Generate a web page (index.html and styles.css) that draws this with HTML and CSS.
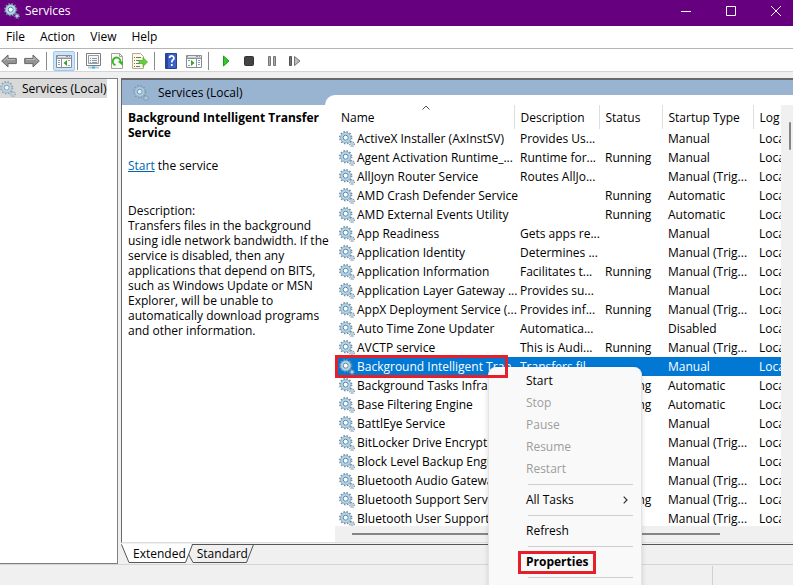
FILE: index.html
```html
<!DOCTYPE html>
<html lang="en">
<head>
<meta charset="utf-8">
<title>Services</title>
<link rel="stylesheet" href="styles.css">
</head>
<body>
<svg class="defs" aria-hidden="true">
  <symbol id="gear" viewBox="0 0 16 16">
    <circle cx="6.700" cy="6.700" r="5.800" fill="none" stroke="#748c9e" stroke-width="1.800" stroke-dasharray="1.500 1.540"/>
    <circle cx="6.700" cy="6.700" r="4" fill="#fff" stroke="#b4d6ea" stroke-width="2.600"/>
    <circle cx="6.700" cy="6.700" r="5.100" fill="none" stroke="#7a9fb7" stroke-width=".7"/>
    <circle cx="6.700" cy="6.700" r="2.500" fill="#fff" stroke="#5483a4" stroke-width="1"/>
    <circle cx="13" cy="13" r="2.300" fill="none" stroke="#7690a4" stroke-width="1.300" stroke-dasharray="1 .8"/>
    <circle cx="13" cy="13" r="1.300" fill="#f0f7fb" stroke="#97b8cc"/>
  </symbol>
</svg>
<div class="window">
  <header class="titlebar">
    <svg class="app-icon"><use href="#gear"/></svg>
    <h1>Services</h1>
    <button class="caption" aria-label="Minimize"><svg viewBox="0 0 10 10"><path d="M0 5.500h10"/></svg></button>
    <button class="caption" aria-label="Maximize"><svg viewBox="0 0 10 10"><path d="M.5.5h9v9h-9z"/></svg></button>
    <button class="caption" aria-label="Close"><svg viewBox="0 0 10 10"><path d="M0 0l10 10M10 0L0 10"/></svg></button>
  </header>
  <nav class="menubar">
    <button>File</button><button>Action</button><button>View</button><button>Help</button>
  </nav>
  <div class="toolbar">
    <div class="group">
      <button aria-label="Back"><svg viewBox="0 0 16 16"><path d="M.7 8L7 2v3.400h8.300v5.200H7V14z" fill="#949494" stroke="#666"/><path d="M3 7.600L6.300 4.500v2h7.700" fill="none" stroke="#bbb"/></svg></button>
      <button aria-label="Forward"><svg viewBox="0 0 16 16"><path d="M15.300 8L9 2v3.400H.7v5.200H9V14z" fill="#949494" stroke="#666"/><path d="M2 6.500h8v-2L13 7.600" fill="none" stroke="#bbb"/></svg></button>
    </div>
    <div class="group single">
      <button class="pressed" aria-label="Show/Hide Console Tree"><svg viewBox="0 0 16 16"><path d="M.5 2.500h15v12H.5z" fill="#fff" stroke="#858b90"/><path d="M1 2.500h14v2H1z" fill="#8b9299"/><path d="M2 3.500h8M12 3.500h1M14 3.500h1" stroke="#e5eaee"/><path d="M.5 5.500h15M5.500 6v8.500" stroke="#8b9299"/><path d="M2 7.500h2M2 9.500h2M2 11.500h2M12 7.500h2M12 12.500h2" stroke="#7e9fc4"/><path d="M11 7v6L7.500 10z" fill="#37a32c"/></svg></button>
    </div>
    <div class="group">
      <button aria-label="Properties"><svg viewBox="0 0 16 16"><path d="M.5.500h14v12H.5z" fill="#fff" stroke="#7d7d7d"/><path d="M2.500 2.500h10v8h-10z" fill="#f4f6f8" stroke="#9a9a9a"/><path d="M4 5.500h1M6 5.500h5M4 7.500h1M6 7.500h5M4 9.500h1M6 9.500h5" stroke="#8797a6"/><path d="M2 14.500h11" stroke="#a9cfe4" stroke-width="2"/><path d="M6 14.500h3" stroke="#45b1e8" stroke-width="2"/></svg></button>
      <button aria-label="Refresh"><svg viewBox="0 0 16 16"><path d="M2.500.5h8l3 3v12h-11z" fill="#fcfcf5" stroke="#a2a29b"/><path d="M10.500.5v3h3" fill="none" stroke="#a2a29b"/><path d="M6.500 12A3.800 3.800 0 1 1 11.300 9" fill="none" stroke="#38b52c" stroke-width="2"/><path d="M8.500 8.500H14v4.500z" fill="#38b52c"/></svg></button>
      <button aria-label="Export List"><svg viewBox="0 0 16 16"><path d="M.5.5h8l3 3v12H.5z" fill="#fffbe3" stroke="#b4aa91"/><path d="M2 4.500h1M4 4.500h5M2 7.500h1M4 7.500h4M2 10.500h1M4 10.500h4M2 13.500h1M4 13.500h4" stroke="#6b7880"/><path d="M7 7.500h4V4.500L15.500 9 11 13.500v-3H7z" fill="#65d13b" stroke="#49a92c" stroke-width=".7"/></svg></button>
    </div>
    <div class="group">
      <button aria-label="Help"><svg viewBox="0 0 16 16"><path d="M2.500.5h11v15h-11z" fill="#3b5fcb" stroke="#29438f"/><path d="M3 1h2v14H3z" fill="#27479f"/><path d="M6.500 5a2.200 2.200 0 1 1 3.300 2c-1 .6-1 1-1 2.500M8.800 11v2" fill="none" stroke="#fff" stroke-width="1.800"/></svg></button>
      <button aria-label="Show/Hide Action Pane"><svg viewBox="0 0 16 16"><path d="M.5 2.500h15v12H.5z" fill="#fff" stroke="#858b90"/><path d="M1 2.500h14v2H1z" fill="#8b9299"/><path d="M2 3.500h8M12 3.500h1M14 3.500h1" stroke="#e5eaee"/><path d="M.5 5.500h15M10.500 6v8.500" stroke="#8b9299"/><path d="M12 7.500h2M12 9.500h2M12 11.500h2M2 7.500h2M2 12.500h2" stroke="#7e9fc4"/><path d="M5 7v6l3.500-3z" fill="#37a32c"/></svg></button>
    </div>
    <div class="group wide">
      <button aria-label="Start Service"><svg viewBox="0 0 16 16"><path d="M5.500 3v10l5.500-5z" fill="#35c62c" stroke="#1e9b1a"/></svg></button>
      <button aria-label="Stop Service"><svg viewBox="0 0 16 16"><rect x="3.500" y="3.500" width="9" height="9" rx="1" fill="#444" stroke="#333"/></svg></button>
      <button aria-label="Pause Service"><svg viewBox="0 0 16 16"><path d="M4.500 3.500h2v9h-2zM9.500 3.500h2v9h-2z" fill="#aaa" stroke="#777"/></svg></button>
      <button aria-label="Restart Service"><svg viewBox="0 0 16 16"><path d="M2.500 3.500h2v9h-2z" fill="#777" stroke="#555"/><path d="M7.500 3.500v9l5.500-4.500z" fill="#bbb" stroke="#777"/></svg></button>
    </div>
  </div>
  <main class="body">
    <aside class="tree"><a href="#"><svg><use href="#gear"/></svg><span>Services (Local)</span></a></aside>
    <section class="content">
      <div class="view">
        <h2 class="view-title"><svg><use href="#gear"/></svg>Services (Local)</h2>
        <div class="details">
          <h3>Background Intelligent Transfer Service</h3>
          <p><a href="#">Start</a> the service</p>
          <p class="description">Description:<br>Transfers files in the background using idle network bandwidth. If the service is disabled, then any applications that depend on BITS, such as Windows Update or MSN Explorer, will be unable to automatically download programs and other information.</p>
        </div>
        <div class="list">
          <div class="rows">
          <table>
            <colgroup><col class="c-name"><col class="c-desc"><col class="c-status"><col class="c-type"><col></colgroup>
            <thead><tr><th>Name<svg class="sort" viewBox="0 0 8 5"><path d="M.5 4.500L4 1l3.500 3.500"/></svg></th><th>Description</th><th>Status</th><th>Startup Type</th><th>Log</th></tr></thead>
            <tbody>
            <tr><td><svg><use href="#gear"/></svg>ActiveX Installer (AxInstSV)</td><td>Provides Us...</td><td></td><td>Manual</td><td>Local</td></tr>
            <tr><td><svg><use href="#gear"/></svg>Agent Activation Runtime_...</td><td>Runtime for...</td><td>Running</td><td>Manual</td><td>Local</td></tr>
            <tr><td><svg><use href="#gear"/></svg>AllJoyn Router Service</td><td>Routes AllJo...</td><td></td><td>Manual (Trig...</td><td>Local</td></tr>
            <tr><td><svg><use href="#gear"/></svg>AMD Crash Defender Service</td><td></td><td>Running</td><td>Automatic</td><td>Local</td></tr>
            <tr><td><svg><use href="#gear"/></svg>AMD External Events Utility</td><td></td><td>Running</td><td>Automatic</td><td>Local</td></tr>
            <tr><td><svg><use href="#gear"/></svg>App Readiness</td><td>Gets apps re...</td><td></td><td>Manual</td><td>Local</td></tr>
            <tr><td><svg><use href="#gear"/></svg>Application Identity</td><td>Determines ...</td><td></td><td>Manual (Trig...</td><td>Local</td></tr>
            <tr><td><svg><use href="#gear"/></svg>Application Information</td><td>Facilitates t...</td><td>Running</td><td>Manual (Trig...</td><td>Local</td></tr>
            <tr><td><svg><use href="#gear"/></svg>Application Layer Gateway ...</td><td>Provides su...</td><td></td><td>Manual</td><td>Local</td></tr>
            <tr><td><svg><use href="#gear"/></svg>AppX Deployment Service (...</td><td>Provides inf...</td><td>Running</td><td>Manual (Trig...</td><td>Local</td></tr>
            <tr><td><svg><use href="#gear"/></svg>Auto Time Zone Updater</td><td>Automatica...</td><td></td><td>Disabled</td><td>Local</td></tr>
            <tr><td><svg><use href="#gear"/></svg>AVCTP service</td><td>This is Audi...</td><td>Running</td><td>Manual (Trig...</td><td>Local</td></tr>
            <tr class="selected"><td><svg><use href="#gear"/></svg>Background Intelligent Tran<span class="marker"></span></td><td>Transfers fil...</td><td></td><td>Manual</td><td>Local</td></tr>
            <tr><td><svg><use href="#gear"/></svg>Background Tasks Infrast</td><td></td><td>Running</td><td>Automatic</td><td>Local</td></tr>
            <tr><td><svg><use href="#gear"/></svg>Base Filtering Engine</td><td></td><td>Running</td><td>Automatic</td><td>Local</td></tr>
            <tr><td><svg><use href="#gear"/></svg>BattlEye Service</td><td></td><td></td><td>Manual</td><td>Local</td></tr>
            <tr><td><svg><use href="#gear"/></svg>BitLocker Drive Encryptio</td><td></td><td></td><td>Manual (Trig...</td><td>Local</td></tr>
            <tr><td><svg><use href="#gear"/></svg>Block Level Backup Engin</td><td></td><td></td><td>Manual</td><td>Local</td></tr>
            <tr><td><svg><use href="#gear"/></svg>Bluetooth Audio Gateway</td><td></td><td></td><td>Manual (Trig...</td><td>Local</td></tr>
            <tr><td><svg><use href="#gear"/></svg>Bluetooth Support Servic</td><td></td><td>Running</td><td>Manual (Trig...</td><td>Local</td></tr>
            <tr><td><svg><use href="#gear"/></svg>Bluetooth User Support S</td><td></td><td></td><td>Manual (Trig...</td><td>Local</td></tr>
            </tbody>
          </table>
          </div>
          <div class="vscroll"><span></span></div>
          <div class="hscroll"><span></span></div>
        </div>
      </div>
      <div class="tabs">
        <svg class="tab-lines" viewBox="0 0 135 20"><path d="M0 0h71L64 18.500H8z" fill="#fff"/><path d="M.5.5L8 18.500h56.500L71.500.5H135" fill="none" stroke="#555"/><path d="M67.500 10L72 18.500h53.500L132.500.5" fill="none" stroke="#555"/></svg>
        <button>Extended</button><button>Standard</button>
      </div>
    </section>
  </main>
  <footer class="statusbar"><span></span><span></span></footer>
</div>
<div class="context" role="menu">
  <button role="menuitem">Start</button>
  <button role="menuitem" disabled>Stop</button>
  <button role="menuitem" disabled>Pause</button>
  <button role="menuitem" disabled>Resume</button>
  <button role="menuitem" disabled>Restart</button>
  <hr>
  <button role="menuitem">All Tasks<svg viewBox="0 0 5 8"><path d="M.7.7L4 4 .7 7.300"/></svg></button>
  <hr>
  <button role="menuitem">Refresh</button>
  <hr>
  <button role="menuitem" class="default">Properties<span class="marker"></span></button>
  <hr>
</div>
</body>
</html>
```
FILE: styles.css
```css
* { box-sizing: border-box; }
html, body { height: 100%; }
body {
  margin: 0;
  overflow: hidden;
  color: #000;
  background: #f0f0f0;
  font: 12px/15px "Open Sans", "Noto Sans", sans-serif;
}
button {
  margin: 0;
  padding: 0;
  border: 0;
  background: none;
  color: inherit;
  font: inherit;
}
h1, h2, h3, p { margin: 0; font-size: 12px; font-weight: 400; }
svg { display: block; width: 16px; height: 16px; flex: none; }
.defs { position: absolute; width: 0; height: 0; }
.window { display: flex; flex-direction: column; height: 100%; }

.titlebar {
  display: flex;
  align-items: center;
  height: 26px;
  padding: 0 1px 5px 4px;
  background: #66007f;
  color: #fff;
}
.titlebar h1 { flex: 1; padding-left: 5px; }
.caption { width: 45px; height: 20px; display: grid; place-items: center; }
.caption:last-child { margin-right: -6px; }
.caption svg { width: 10px; height: 10px; fill: none; stroke: #fff; }

.menubar {
  display: flex;
  gap: 15px;
  height: 23px;
  padding: 0 0 1px 6px;
  background: #fff;
  border-bottom: 1px solid #b5b5b5;
}

.toolbar {
  display: flex;
  align-items: center;
  height: 23px;
  padding-top: 2px;
  background: #fff;
  border-bottom: 1px solid #d5d5d5;
}
.group { display: flex; align-items: center; gap: 7px; padding: 0 6px; height: 18px; border-left: 1px solid #8a8a8a; }
.group:first-child { padding-left: 1px; border-left: 0; }
.group + .group { padding-left: 8px; }
.group + .single { padding: 0 2px 0 6px; }
.group + .wide { padding-left: 9px; }
.toolbar .pressed {
  display: grid;
  place-items: center;
  width: 22px;
  height: 20px;
  border: 1px solid #99c9ef;
  border-radius: 2px;
  background: #cce5fa;
}

.body { flex: 1; display: flex; gap: 3px; min-height: 0; padding-top: 6px; }
.tree {
  width: 118px;
  background: #fff;
  border: 1px solid #7b7f86;
  border-left: 0;
}
.tree a {
  display: flex;
  align-items: center;
  gap: 6px;
  width: 107px;
  height: 19px;
  background: #d9d9d9;
  color: inherit;
  text-decoration: none;
  white-space: nowrap;
}
.tree svg, .view-title svg { opacity: .7; }
.content { flex: 1; display: flex; flex-direction: column; min-width: 0; }
.view {
  flex: 1;
  display: grid;
  grid-template: 15px 10px 1fr / 203px 1fr;
  min-height: 0;
  background: #fff;
  border: solid #696969;
  border-width: 2px 0 0 1px;
  border-bottom: 1px solid #dedede;
}
.view-title {
  grid-area: 1 / 1 / 3 / 3;
  display: flex;
  align-items: center;
  gap: 9px;
  padding-left: 11px;
  background: #99b4d1;
}
.details { grid-area: 3 / 1; z-index: 1; margin-right: -12px; padding: 5px 0 0 6px; }
.details h3 { font-weight: 700; margin-bottom: 18px; }
.details .description { margin-top: 30px; }
.details a { color: #0066b4; }

.list {
  grid-area: 2 / 2 / 4 / 3;
  display: grid;
  grid-template: 10px 1fr 16px / 1fr 12px;
  padding-left: 10px;
  min-height: 0;
  background: #fff;
  border-top-left-radius: 10px;
}
.rows { grid-area: 1 / 1 / 3 / 2; overflow: hidden; padding-top: 10px; }
table { width: 100%; border-collapse: collapse; table-layout: fixed; }
.c-name { width: 179px; }
.c-desc { width: 85px; }
.c-status { width: 63px; }
.c-type { width: 91px; }
th, td { padding: 0 0 0 6px; height: 19px; white-space: nowrap; text-align: left; font-weight: 400; }
th { height: 24px; border-right: 1px solid #dedede; position: relative; }
th:last-child { border-right: 0; }
.sort { position: absolute; left: 87px; top: 0; width: 8px; height: 5px; fill: none; stroke: #555; }
td:first-child { padding-left: 4px; position: relative; line-height: 19px; }
td svg { display: inline-block; vertical-align: -4px; margin-right: 2px; }
.selected { background: #0078d4; color: #fff; }
.vscroll { grid-area: 2 / 2 / 3 / 3; background: #f0f0f0; padding: 17px 2px 0 8px; }
.vscroll span { display: block; height: 28px; background: #858585; border-radius: 1px; }
.hscroll { grid-area: 3 / 1 / 4 / 3; background: #f0f0f0; padding: 7px 73px 0 17px; }
.hscroll span { display: block; height: 2px; background: #858585; }

.marker { position: absolute; border: 3px solid #e5202b; z-index: 1; }
.selected .marker { inset: -2px 6px -2px 0; }

.tabs { position: relative; display: flex; gap: 11px; height: 20px; margin-top: 1px; padding-left: 12px; border-top: 1px solid #555; }
.tab-lines { position: absolute; left: 0; top: -1px; width: 135px; height: 20px; }
.tabs button { position: relative; height: 17px; }

.statusbar { display: flex; height: 21px; border-top: 1px solid #d5d5d5; }
.statusbar span { width: 81px; margin-top: 1px; border-left: 1px solid #d0d0d0; }
.statusbar span:first-child { flex: 1; border: 0; }

.context {
  position: absolute;
  left: 488px;
  top: 367px;
  width: 154px;
  padding: 3px 0 20px;
  background: #f9f9f9;
  border: 1px solid #e3e3e3;
  border-top: 0;
  border-radius: 8px;
  box-shadow: 0 2px 5px rgba(0, 0, 0, .15);
}
.context button {
  position: relative;
  display: flex;
  align-items: center;
  justify-content: space-between;
  width: 100%;
  height: 22px;
  padding: 0 13px 1px 37px;
}
.context button:disabled { color: #9d9d9d; }
.context hr { height: 1px; margin: 4px 8px 4px 39px; border: 0; background: #cfcfcf; }
.context svg { width: 5px; height: 8px; fill: none; stroke: #333; stroke-width: 1.2; }
.context .default { font-weight: 700; }
.context .marker { inset: 0 45px -1px 29px; }
```
